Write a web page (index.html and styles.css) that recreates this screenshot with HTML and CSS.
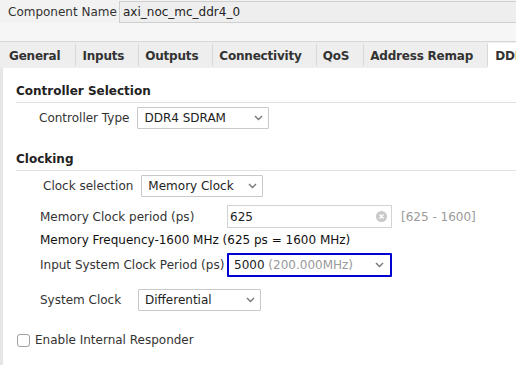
FILE: index.html
```html
<!DOCTYPE html>
<html lang="en">
<head>
  <meta charset="UTF-8">
  <title>Customize IP</title>
  <link rel="stylesheet" href="styles.css">
</head>
<body>
  <header class="name-row">
    <span class="name-label">Component Name</span>
    <div class="name-input">axi_noc_mc_ddr4_0</div>
  </header>
  <div class="band"></div>
  <nav class="tabs">
    <span class="tab first">General</span>
    <span class="tab">Inputs</span>
    <span class="tab">Outputs</span>
    <span class="tab">Connectivity</span>
    <span class="tab">QoS</span>
    <span class="tab">Address Remap</span>
    <span class="tab active">DDR Basic</span>
  </nav>
  <main class="panel">
    <h2 class="heading">Controller Selection</h2>
    <div class="field ctrl-type">
      <span class="label">Controller Type</span>
      <div class="select w-132">
        <span>DDR4 SDRAM</span>
        <svg class="chev" width="9" height="6" viewBox="0 0 9 6"><path d="M1 1l3.5 3.5L8 1" fill="none" stroke="#777" stroke-width="1.4"/></svg>
      </div>
    </div>

    <h2 class="heading second">Clocking</h2>
    <div class="field clock-sel">
      <span class="label">Clock selection</span>
      <div class="select w-122">
        <span>Memory Clock</span>
        <svg class="chev" width="9" height="6" viewBox="0 0 9 6"><path d="M1 1l3.5 3.5L8 1" fill="none" stroke="#777" stroke-width="1.4"/></svg>
      </div>
    </div>
    <div class="field period">
      <span class="label wide">Memory Clock period (ps)</span>
      <div class="textbox">
        <span>625</span>
        <svg class="clear" width="11" height="11" viewBox="0 0 11 11"><circle cx="5.5" cy="5.5" r="5.5" fill="#c9c9c9"/><path d="M3.5 3.5l4 4M7.5 3.5l-4 4" stroke="#fff" stroke-width="1.4"/></svg>
      </div>
      <span class="range">[625 - 1600]</span>
    </div>
    <div class="info">Memory Frequency-1600 MHz (625 ps = 1600 MHz)</div>
    <div class="field sys-period">
      <span class="label wide">Input System Clock Period (ps)</span>
      <div class="select focused">
        <span>5000 <span class="muted">(200.000MHz)</span></span>
        <svg class="chev" width="9" height="6" viewBox="0 0 9 6"><path d="M1 1l3.5 3.5L8 1" fill="none" stroke="#777" stroke-width="1.4"/></svg>
      </div>
    </div>
    <div class="field sys-clock">
      <span class="label mid">System Clock</span>
      <div class="select w-123">
        <span>Differential</span>
        <svg class="chev" width="9" height="6" viewBox="0 0 9 6"><path d="M1 1l3.5 3.5L8 1" fill="none" stroke="#777" stroke-width="1.4"/></svg>
      </div>
    </div>
    <label class="check">
      <span class="box"></span>
      Enable Internal Responder
    </label>
  </main>
</body>
</html>
```

FILE: styles.css
```css
html, body {
  margin: 0;
  height: 100%;
}
body {
  background: #f2f2f2;
  font-family: "DejaVu Sans", sans-serif;
  font-size: 12px;
  color: #333;
  overflow: hidden;
  display: flex;
  flex-direction: column;
}

/* component name */
.name-row {
  display: flex;
  align-items: center;
  height: 23px;
  padding-left: 8px;
  flex: none;
}
.name-label {
  width: 111px;
  flex: none;
  white-space: nowrap;
}
.name-input {
  flex: 1;
  height: 20px;
  line-height: 20px;
  padding-left: 3px;
  background: #eeeeee;
  border: 1px solid #cfcfcf;
  border-right: none;
  color: #222;
}
.band {
  height: 18px;
  flex: none;
  background: #f6f6f6;
}

/* tabs */
.tabs {
  display: flex;
  flex: none;
  height: 26px;
  background: #eeeeee;
  border-top: 1px solid #d6d6d6;
  white-space: nowrap;
  overflow: hidden;
}
.tab {
  display: flex;
  align-items: center;
  padding: 1px 14px 0 6px;
  font-weight: bold;
  letter-spacing: -0.2px;
  color: #333;
  border-right: 1px solid #d8d8d8;
  margin: 2px 0;
}
.tab.first {
  padding-left: 9px;
  padding-right: 15px;
}
.tab.active {
  background: #fff;
  border-right: none;
  margin: 1px 0 0;
  padding-left: 7px;
}

/* panel */
.panel {
  flex: 1;
  background: #fff;
  border-left: 3px solid #e6e6e6;
  padding: 16px 0 0 13px;
}
.heading {
  margin: 0;
  font-size: 12px;
  font-weight: bold;
  line-height: 15px;
  padding-bottom: 3px;
  border-bottom: 1px solid #e1e1e1;
  color: #222;
}
.heading.second {
  margin-top: 23px;
}

.field {
  display: flex;
  align-items: center;
  white-space: nowrap;
}
.label {
  padding-right: 8px;
  flex: none;
}
.label.wide {
  box-sizing: border-box;
  width: 187px;
}
.label.mid {
  box-sizing: border-box;
  width: 98px;
}
.ctrl-type {
  margin: 4px 0 0 23px;
}
.clock-sel {
  margin: 4px 0 0 27px;
}
.period {
  margin: 8px 0 0 24px;
}
.sys-period {
  margin: 5px 0 0 24px;
}
.sys-clock {
  margin: 12px 0 0 24px;
}

.select {
  box-sizing: border-box;
  height: 22px;
  display: flex;
  align-items: center;
  justify-content: space-between;
  padding: 0 5px 0 6px;
  border: 1px solid #c9c9c9;
  border-radius: 1px;
  background: #fff;
  color: #222;
}
.w-132 { width: 132px; }
.w-122 { width: 122px; }
.w-123 { width: 123px; }
.select.focused {
  width: 165px;
  height: 24px;
  border: 2px solid #0000d0;
  padding-left: 5px;
  padding-right: 6px;
}
.muted {
  color: #999;
}
.chev {
  flex: none;
}

.textbox {
  box-sizing: border-box;
  width: 165px;
  height: 23px;
  display: flex;
  align-items: center;
  justify-content: space-between;
  padding: 0 4px 0 2px;
  border: 1px solid #d2d2d2;
  color: #222;
}
.range {
  margin-left: 9px;
  color: #9a9a9a;
}

.info {
  margin: 5px 0 0 24px;
  line-height: 15px;
  color: #111;
}

.check {
  display: flex;
  align-items: center;
  margin: 22px 0 0 1px;
  line-height: 15px;
}
.box {
  width: 11px;
  height: 11px;
  border: 1px solid #a0a0a0;
  border-radius: 3px;
  margin-right: 5px;
}
```
